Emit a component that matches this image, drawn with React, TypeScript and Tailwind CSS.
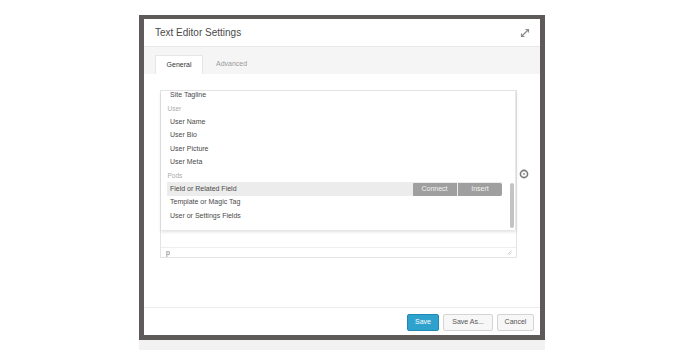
import React from 'react';

const items: { label: string; group?: boolean; active?: boolean }[] = [
  { label: 'Site Tagline' },
  { label: 'User', group: true },
  { label: 'User Name' },
  { label: 'User Bio' },
  { label: 'User Picture' },
  { label: 'User Meta' },
  { label: 'Pods', group: true },
  { label: 'Field or Related Field', active: true },
  { label: 'Template or Magic Tag' },
  { label: 'User or Settings Fields' },
];

function ExpandIcon() {
  return (
    <svg width="10" height="10" viewBox="0 0 10 10" fill="none" stroke="#8a8a8a" strokeWidth="1.2">
      <path d="M1.5 8.5 L8.5 1.5" />
      <path d="M5.5 1.5 H8.5 V4.5" />
      <path d="M1.5 5.5 V8.5 H4.5" />
    </svg>
  );
}

function CloseCircle() {
  return (
    <svg width="10" height="10" viewBox="0 0 10 10" fill="none">
      <circle cx="5" cy="5" r="3.6" stroke="#7a7a7a" strokeWidth="1.6" />
      <path d="M3.8 3.8 L6.2 6.2 M6.2 3.8 L3.8 6.2" stroke="#9a9a9a" strokeWidth="0.8" />
    </svg>
  );
}

export default function App() {
  return (
    <div className="w-[688px] h-[350px] bg-white pt-[15px] pl-[139px] overflow-hidden font-['Liberation_Sans',Arial,sans-serif]">
      <div className="w-[406px] h-[325px] border-[#5e5a5a] border-t-4 border-x-[5px] border-b-[5px] bg-white flex flex-col">
        {/* header */}
        <div className="h-[28px] flex items-center justify-between pl-[11px] pr-[10px] border-b border-[#e9e9e9] shrink-0">
          <span className="text-[10px] text-[#4a4a4a]">Text Editor Settings</span>
          <ExpandIcon />
        </div>

        {/* tabs */}
        <div className="h-[27px] bg-[#f5f5f5] flex items-end pl-[11px] shrink-0">
          <div className="w-[48px] h-[19px] bg-white border-t border-x border-[#e6e6e6] flex items-center justify-center text-[7px] text-[#333]">
            General
          </div>
          <div className="h-[19px] pl-[13px] flex items-center text-[7px] text-[#9a9a9a]">Advanced</div>
        </div>

        {/* body */}
        <div className="flex-1 pt-[16px] pl-[16px] flex items-start gap-[2px]">
          <div className="w-[357px] h-[168px] border border-[#e4e4e4] flex flex-col">
            <div className="h-[139px] flex shadow-[0_2px_3px_rgba(0,0,0,0.12)] overflow-hidden relative z-10 bg-white">
              <div className="flex-1 pl-[6px] pr-[4px] -mt-[2.7px]">
                {items.map((it) =>
                  it.group ? (
                    <div key={it.label} className="h-[13.45px] flex items-center pl-[0.5px] text-[6.5px] text-[#ababab]">
                      {it.label}
                    </div>
                  ) : it.active ? (
                    <div key={it.label} className="h-[13.45px] flex items-center bg-[#ececec]">
                      <span className="flex-1 pl-[3px] text-[7px] text-[#4a4a4a]">{it.label}</span>
                      <span className="w-[44px] h-[13px] bg-[#9f9f9f] text-[#f2f2f2] text-[7px] flex items-center justify-center rounded-l-[1px]">
                        Connect
                      </span>
                      <span className="w-[44px] h-[13px] ml-[1.5px] bg-[#9f9f9f] text-[#f2f2f2] text-[7px] flex items-center justify-center rounded-r-[2px]">
                        Insert
                      </span>
                    </div>
                  ) : (
                    <div key={it.label} className="h-[13.45px] flex items-center pl-[3px] text-[7px] text-[#4a4a4a]">
                      {it.label}
                    </div>
                  )
                )}
              </div>
              <div className="w-[10px] pl-[4px] border-r border-[#e8e8e8]">
                <div className="w-[4px] h-[45px] mt-[92px] rounded-full bg-[#c3c3c3]" />
              </div>
            </div>
            <div className="flex-1" />
            <div className="h-[10px] border-t border-[#eeeeee] flex items-center justify-between pl-[5px] pr-[4px]">
              <span className="text-[7px] text-[#777] leading-none">p</span>
              <svg width="5" height="5" viewBox="0 0 5 5" stroke="#bbb" strokeWidth="0.7">
                <path d="M0.5 4.5 L4.5 0.5 M2.5 4.5 L4.5 2.5" />
              </svg>
            </div>
          </div>
          <div className="mt-[79px]">
            <CloseCircle />
          </div>
        </div>

        {/* footer */}
        <div className="h-[28px] border-t border-[#ececec] flex items-start justify-end gap-[4px] pt-[6px] pr-[6px] shrink-0">
          <button className="w-[32px] h-[17px] rounded-[2px] bg-[#2ea2cc] border border-[#1f8ab5] text-white text-[7px]">
            Save
          </button>
          <button className="w-[50px] h-[17px] rounded-[2px] bg-[#f7f7f7] border border-[#d4d4d4] text-[#555] text-[7px]">
            Save As...
          </button>
          <button className="w-[37px] h-[17px] rounded-[2px] bg-[#f7f7f7] border border-[#d4d4d4] text-[#555] text-[7px]">
            Cancel
          </button>
        </div>
      </div>
      <div className="w-[406px] h-[10px] bg-[#f2f2f2]" />
    </div>
  );
}
